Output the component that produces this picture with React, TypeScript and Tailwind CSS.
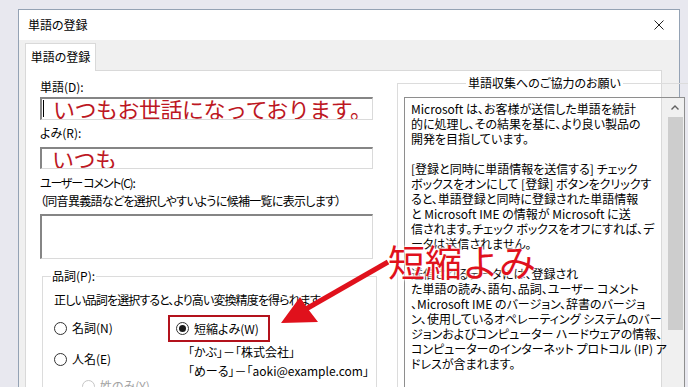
import clsx from "clsx";

const infoLines = [
  "Microsoft は、お客様が送信した単語を統計",
  "的に処理し、その結果を基に、より良い製品の",
  "開発を目指しています。",
  "",
  "[登録と同時に単語情報を送信する] チェック",
  "ボックスをオンにして [登録] ボタンをクリックす",
  "ると、単語登録と同時に登録された単語情報",
  "と Microsoft IME の情報が Microsoft に送",
  "信されます。チェック ボックスをオフにすれば、デ",
  "ータは送信されません。",
  "",
  "送信されるデータには、登録され",
  "た単語の読み、語句、品詞、ユーザー コメント",
  "、Microsoft IME のバージョン、辞書のバージョ",
  "ン、使用しているオペレーティング システムのバー",
  "ジョンおよびコンピューター ハードウェアの情報、",
  "コンピューターのインターネット プロトコル (IP) ア",
  "ドレスが含まれます。",
];

function Radio({ checked, disabled }: { checked?: boolean; disabled?: boolean }) {
  return (
    <span
      className={clsx(
        "flex h-[13px] w-[13px] shrink-0 items-center justify-center rounded-full border bg-white",
        disabled ? "border-[#c6c6c6]" : "border-[#333333]",
      )}
    >
      {checked ? <span className="h-[7px] w-[7px] rounded-full bg-[#1a1a1a]" /> : null}
    </span>
  );
}

function Sunken({ className, children }: { className?: string; children?: React.ReactNode }) {
  return (
    <div
      className={clsx(
        "flex w-[333px] items-start overflow-hidden border-t-2 border-l-2 border-r border-b border-t-[#858585] border-l-[#858585] border-r-[#dadada] border-b-[#dadada] bg-white",
        className,
      )}
    >
      {children}
    </div>
  );
}

export default function App() {
  return (
    <div className="relative h-[387px] w-[688px] overflow-hidden bg-[#e8e8ef] pl-[18px] pt-[9px] font-['Noto_Sans_CJK_JP',sans-serif] text-[12px] leading-[16px] text-black [font-feature-settings:'palt']">
      <div className="flex h-[400px] w-[662px] flex-col border border-[#94a2b4] bg-[#f0f0f0]">
        {/* title bar */}
        <div className="flex h-[30px] shrink-0 items-center justify-between bg-white pl-[9px] pr-[10px]">
          <span>単語の登録</span>
          <svg width="10" height="10" viewBox="0 0 10 10" className="mr-[5px]">
            <path d="M0.5 0.5 L9.5 9.5 M9.5 0.5 L0.5 9.5" stroke="#222" strokeWidth="1" fill="none" />
          </svg>
        </div>

        {/* tab strip */}
        <div className="flex shrink-0 pl-[6px] pt-[3px]">
          <div className="relative z-10 -mb-px flex h-[28px] w-[71px] items-center justify-center border-t border-l border-r border-[#d9d9d9] bg-white pb-px">
            単語の登録
          </div>
        </div>

        {/* panel */}
        <div className="ml-[6px] mr-[17px] flex flex-1 border border-[#d9d9d9] bg-white pl-[14px]">
          <div className="flex w-[337px] shrink-0 flex-col">
            <div className="mt-[8px] h-[16px]">単語(D):</div>
            <Sunken className="mt-[2px] h-[23px]">
              <span className="ml-[1px] mr-[9px] mt-[1px] h-[17px] w-px shrink-0 bg-black" />
              <span className="-mt-[2px] whitespace-nowrap text-[22px] leading-[22px] tracking-[-0.5px] text-[#bd1723] [font-feature-settings:normal]">
                いつもお世話になっております。
              </span>
            </Sunken>

            <div className="mt-[5px] h-[16px]">よみ(R):</div>
            <Sunken className="mt-[6px] h-[22px]">
              <span className="-mt-[2px] ml-[10px] whitespace-nowrap text-[22px] leading-[22px] tracking-[-0.5px] text-[#bd1723] [font-feature-settings:normal]">
                いつも
              </span>
            </Sunken>

            <div className="mt-[6px] h-[16px] whitespace-nowrap tracking-[-1.2px]">ユーザー コメント(C):</div>
            <div className="mt-[2px] h-[16px] whitespace-nowrap tracking-[-0.7px]">（同音異義語などを選択しやすいように候補一覧に表示します）</div>
            <Sunken className="mt-[5px] h-[45px]" />

            <fieldset className="ml-[2px] mt-[9px] h-[140px] w-[335px] border border-[#dcdcdc] pl-[11px]">
              <legend className="ml-[-3px] px-[1px]">品詞(P):</legend>
              <div className="mt-[8px] h-[16px] whitespace-nowrap tracking-[-0.9px]">
                正しい品詞を選択すると、より高い変換精度を得られます
              </div>
              <div className="flex">
                <div className="flex w-[114px] shrink-0 flex-col">
                  <label className="mt-[12px] flex h-[16px] items-center gap-[5px]">
                    <Radio />
                    <span>名詞(N)</span>
                  </label>
                  <label className="mt-[15px] flex h-[16px] items-center gap-[5px]">
                    <Radio />
                    <span>人名(E)</span>
                  </label>
                  <label className="ml-[28px] mt-[11px] flex h-[16px] items-center gap-[5px] text-[#a3a3a3]">
                    <Radio disabled />
                    <span>姓のみ(Y)</span>
                  </label>
                </div>
                <div className="flex flex-col">
                  <div className="mt-[7px] flex h-[27px] w-[102px] items-center gap-[5px] border-2 border-[#b3121c] pl-[6px]">
                    <Radio checked />
                    <span>短縮よみ(W)</span>
                  </div>
                  <div className="mt-[2px] h-[16px] whitespace-nowrap pl-[20px]">「かぶ」－「株式会社」</div>
                  <div className="mt-[3px] h-[16px] whitespace-nowrap pl-[20px]">「めーる」－「aoki@example.com」</div>
                </div>
              </div>
            </fieldset>
          </div>

          <fieldset className="ml-[20px] mt-[4px] h-[330px] w-[261px] shrink-0 border border-[#dcdcdc] pl-[6px] pr-[8px]">
            <legend className="mx-auto px-[2px]">単語収集へのご協力のお願い</legend>
            <div className="mt-[6px] flex h-[300px] border border-[#8e8e8e]">
              <div className="flex-1 overflow-hidden pl-[6px] pt-[3px] leading-[15px]">
                {infoLines.map((line, i) => (
                  <div key={i} className="h-[15px] whitespace-nowrap">
                    {line}
                  </div>
                ))}
              </div>
              <div className="flex w-[17px] shrink-0 flex-col bg-[#f0f0f0]">
                <div className="flex h-[19px] items-center justify-center">
                  <svg width="8" height="5" viewBox="0 0 8 5">
                    <path d="M0.5 4.5 L4 1 L7.5 4.5" stroke="#606060" strokeWidth="1.4" fill="none" />
                  </svg>
                </div>
                <div className="mx-[1px] h-[213px] bg-[#cdcdcd]" />
              </div>
            </div>
          </fieldset>
        </div>
      </div>

      {/* red annotation */}
      <div className="absolute left-[388px] top-[243px] whitespace-nowrap text-[37px] leading-[37px] text-[#e0111c] [font-feature-settings:normal] [text-shadow:0_0_2px_#fff,0_0_3px_#fff,0_0_4px_#fff]">
        短縮よみ
      </div>
      <svg className="pointer-events-none absolute left-0 top-0" width="688" height="387" viewBox="0 0 688 387">
        <line x1="388" y1="262" x2="306" y2="309" stroke="#e0111c" strokeWidth="5" />
        <polygon points="281,323 300,297 308,309 318,322" fill="#e0111c" />
      </svg>
    </div>
  );
}
